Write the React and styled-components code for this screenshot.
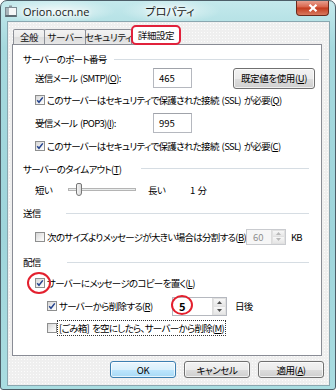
import React from "react";
import styled, { createGlobalStyle } from "styled-components";

const GlobalStyle = createGlobalStyle`
  html, body { margin: 0; padding: 0; background: #ffffff; }
  body {
    font-family: "Noto Sans CJK JP", "Noto Sans", sans-serif;
    font-size: 9.5px;
    letter-spacing: -0.7px;
    word-spacing: 1.5px;
    color: #000;
    font-feature-settings: "palt";
  }
  #root { width: 336px; height: 390px; }
`;

const Frame = styled.div`
  width: 336px;
  height: 390px;
  box-sizing: border-box;
  border: 1px solid #4d5e68;
  border-radius: 7px 7px 3px 3px;
  background: linear-gradient(180deg, #c4e9ec 0%, #a5d9de 12%, #9fd5db 60%, #a9dde1 100%);
  display: flex;
  flex-direction: column;
  overflow: hidden;
`;

const TitleBar = styled.div`
  height: 20px;
  flex: none;
  display: grid;
  grid-template-columns: 1fr auto 1fr;
  align-items: center;
  padding-left: 4px;
  background:
    radial-gradient(ellipse 60px 12px at 55px 10px, rgba(255,255,255,0.75), transparent),
    radial-gradient(ellipse 50px 12px at 170px 10px, rgba(255,255,255,0.6), transparent);
`;

const TitleLeft = styled.div`
  display: flex;
  align-items: center;
  gap: 5px;
`;

const TitleText = styled.span`
  font-family: "Open Sans", "Noto Sans CJK JP", sans-serif;
  font-size: 11px;
  letter-spacing: 0;
  word-spacing: 0;
  color: #1a1a1a;
  text-shadow: 0 0 5px #fff, 0 0 8px #fff;
`;

const CloseButton = styled.div`
  justify-self: end;
  align-self: start;
  margin: -1px 6px 0 0;
  width: 33px;
  height: 16px;
  box-sizing: border-box;
  border: 1px solid #6b2a1c;
  border-top: none;
  border-radius: 0 0 4px 4px;
  background: linear-gradient(180deg, #e9a899 0%, #d8634a 48%, #c23a1d 52%, #d87a5f 100%);
  display: flex;
  align-items: center;
  justify-content: center;
`;

const Body = styled.div`
  flex: 1;
  margin: 0 5px 3px 6px;
  border: 1px solid #8aa7b0;
  background-color: #efefef;
  background-image: radial-gradient(#fcfcfc 0.7px, transparent 0.8px);
  background-size: 3px 3px;
  display: flex;
  flex-direction: column;
`;

const TabStrip = styled.div`
  height: 19px;
  margin: 3px 0 0 5px;
  display: flex;
  align-items: flex-end;
  position: relative;
  z-index: 1;
`;

const Tab = styled.div`
  width: ${p => p.w}px;
  height: ${p => (p.active ? 20 : 15)}px;
  box-sizing: border-box;
  margin-right: -1px;
  margin-bottom: ${p => (p.active ? -1 : 0)}px;
  border: ${p => (p.active ? "2px solid #e1213b" : "1px solid #8c8f97")};
  border-bottom: ${p => (p.active ? "2px solid #e1213b" : "none")};
  border-radius: ${p => (p.active ? "5px" : "2px 2px 0 0")};
  background: ${p => (p.active ? "#ffffff" : "linear-gradient(180deg, #f3f3f3 0%, #ebebeb 50%, #dedede 51%, #e6e6e6 100%)")};
  display: flex;
  align-items: center;
  justify-content: center;
  white-space: nowrap;
  letter-spacing: -0.4px;
  color: #111;
`;

const Panel = styled.div`
  flex: 1;
  margin: 0 7px 0 4px;
  border: 1px solid #898c95;
  background: #ffffff;
  display: flex;
  flex-direction: column;
  padding: 5px 0 0 10px;
`;

const Heading = styled.div`
  height: ${p => p.h}px;
  margin-top: ${p => p.mt || 0}px;
  display: flex;
  align-items: center;
  justify-content: space-between;
  padding-right: 12px;
  flex: none;
`;

const HeadLine = styled.div`
  width: ${p => p.w}px;
  height: 1px;
  background: #d6dde3;
`;

const Row = styled.div`
  height: ${p => p.h}px;
  margin-top: ${p => p.mt || 0}px;
  padding-left: ${p => p.indent}px;
  padding-right: ${p => p.pr || 0}px;
  display: flex;
  align-items: center;
  flex: none;
`;

const Label = styled.span`
  width: ${p => (p.w ? p.w + "px" : "auto")};
  margin-left: ${p => p.ml || 0}px;
  flex: none;
  white-space: nowrap;
`;

const TextBox = styled.div`
  width: ${p => p.w}px;
  height: ${p => p.h}px;
  box-sizing: border-box;
  border: 1px solid #b5b8bf;
  border-top-color: #a0a3aa;
  background: #fff;
  display: flex;
  align-items: center;
  padding-left: 5px;
  letter-spacing: 0;
`;

const PushButton = styled.div`
  width: ${p => p.w}px;
  height: ${p => p.h}px;
  margin-left: ${p => p.ml || 0}px;
  box-sizing: border-box;
  border: 1px solid ${p => (p.focus ? "#3c7fb1" : "#707070")};
  border-radius: 3px;
  background: ${p => p.focus
    ? "linear-gradient(180deg, #eaf6fd 0%, #d9f0fc 50%, #bee6fd 51%, #a7d9f5 100%)"
    : "linear-gradient(180deg, #f2f2f2 0%, #ebebeb 50%, #dddddd 51%, #cfcfcf 100%)"};
  box-shadow: inset 0 0 0 1px rgba(255,255,255,0.7);
  display: flex;
  align-items: center;
  justify-content: center;
  white-space: nowrap;
  letter-spacing: -0.4px;
  flex: none;
`;

const Box = styled.span`
  position: relative;
  width: 10px;
  height: 10px;
  box-sizing: border-box;
  border: 1px solid #8e8f8f;
  background: linear-gradient(135deg, #d6d6d6 0%, #f4f4f4 70%, #ffffff 100%);
  margin-right: ${p => p.gap}px;
  flex: none;
  display: flex;
  align-items: center;
  justify-content: center;
`;

const RedRing = styled.span`
  position: absolute;
  left: ${p => p.x}px;
  top: ${p => p.y}px;
  width: ${p => p.w}px;
  height: ${p => p.h}px;
  box-sizing: border-box;
  border: 2px solid #e3202e;
  border-radius: 50%;
  pointer-events: none;
`;

const Focus = styled.span`
  outline: 1px dotted #333;
  padding: 0 1px;
`;

const Track = styled.div`
  position: relative;
  width: 68px;
  height: 3px;
  box-sizing: border-box;
  border: 1px solid #b4b4b4;
  background: #e9ecec;
  margin: 0 12px 0 0;
  flex: none;
`;

const Thumb = styled.span`
  position: absolute;
  left: 7px;
  top: -6px;
  width: 6px;
  height: 13px;
  box-sizing: border-box;
  border: 1px solid #777;
  border-radius: 2px 2px 3px 3px;
  background: linear-gradient(90deg, #f4f4f4, #d9d9d9);
`;

const Spin = styled.div`
  width: ${p => p.w}px;
  height: ${p => p.h}px;
  margin-left: ${p => p.ml || 0}px;
  box-sizing: border-box;
  border: 1px solid ${p => (p.disabled ? "#c9cbcf" : "#b5b8bf")};
  background: ${p => (p.disabled ? "#f6f6f6" : "#fff")};
  display: flex;
  flex: none;
`;

const SpinValue = styled.div`
  flex: 1;
  display: flex;
  align-items: center;
  padding-left: 6px;
  letter-spacing: 0;
  color: ${p => (p.disabled ? "#8f8f8f" : "#000")};
  font-size: ${p => (p.big ? 11 : 9.5)}px;
  font-weight: ${p => (p.big ? 600 : 400)};
`;

const SpinArrows = styled.div`
  width: 13px;
  display: flex;
  flex-direction: column;
  border-left: 1px solid #dcdcdc;
`;

const Arrow = styled.div`
  flex: 1;
  display: flex;
  align-items: center;
  justify-content: center;
  background: linear-gradient(180deg, #f7f7f7, #e6e6e6);
  border: 1px solid #e1e1e1;
  & + & { border-top: none; }
`;

const ValueWrap = styled.span`
  position: relative;
`;

const Footer = styled.div`
  height: 17px;
  margin: 5px 5px 7px 0;
  display: flex;
  justify-content: flex-end;
  gap: 8px;
  flex: none;
`;

function Check({ checked, gap = 2, ring }) {
  return (
    <Box gap={gap}>
      {checked && (
        <svg width="8" height="8" viewBox="0 0 8 8">
          <path d="M1.2 4.2 L3 6.3 L6.8 1.4" fill="none" stroke="#24438e" strokeWidth="1.5" />
        </svg>
      )}
      {ring && <RedRing x={-9} y={-7} w={24} h={22} />}
    </Box>
  );
}

function Tri({ up, color = "#4d4d4d" }) {
  return (
    <svg width="5" height="3" viewBox="0 0 5 3">
      <path d={up ? "M0 3 L2.5 0 L5 3 Z" : "M0 0 L2.5 3 L5 0 Z"} fill={color} />
    </svg>
  );
}

function SpinBox({ w, h, ml, value, disabled, ringed }) {
  const arrowColor = disabled ? "#b8b8b8" : "#4d4d4d";
  return (
    <Spin w={w} h={h} ml={ml} disabled={disabled}>
      <SpinValue disabled={disabled} big={ringed}>
        {ringed ? (
          <ValueWrap>
            {value}
            <RedRing x={-8} y={-3} w={22} h={20} />
          </ValueWrap>
        ) : value}
      </SpinValue>
      <SpinArrows>
        <Arrow><Tri up color={arrowColor} /></Arrow>
        <Arrow><Tri color={arrowColor} /></Arrow>
      </SpinArrows>
    </Spin>
  );
}

function WindowIcon() {
  return (
    <svg width="13" height="13" viewBox="0 0 13 13">
      <rect x="0.5" y="2.5" width="11" height="9" fill="#f4f6f7" stroke="#7b8a92" />
      <rect x="1" y="3" width="3" height="8" fill="#a9b4ba" />
      <rect x="0.5" y="10" width="11" height="2" fill="#5d6b73" />
      <rect x="4" y="0.5" width="3" height="2" fill="#8c9aa1" />
    </svg>
  );
}

export default function App() {
  return (
    <>
      <GlobalStyle />
      <Frame>
        <TitleBar>
          <TitleLeft>
            <WindowIcon />
            <TitleText>Orion.ocn.ne</TitleText>
          </TitleLeft>
          <TitleText>プロパティ</TitleText>
          <CloseButton>
            <svg width="10" height="8" viewBox="0 0 10 8">
              <path d="M1.5 0.8 L8.5 7.2 M8.5 0.8 L1.5 7.2" stroke="#ffffff" strokeWidth="2.2" />
            </svg>
          </CloseButton>
        </TitleBar>

        <Body>
          <TabStrip>
            <Tab w={32}>全般</Tab>
            <Tab w={42}>サーバー</Tab>
            <Tab w={47}>セキュリティ</Tab>
            <Tab w={50} active>詳細設定</Tab>
          </TabStrip>

          <Panel>
            <Heading h={18}>
              <Label>サーバーのポート番号</Label>
              <HeadLine w={195} />
            </Heading>
            <Row h={20} indent={12}>
              <Label w={118}>送信メール (SMTP)(<u>O</u>):</Label>
              <TextBox w={39} h={20}>465</TextBox>
              <PushButton w={82} h={21} ml={41}>既定値を使用(<u>U</u>)</PushButton>
            </Row>
            <Row h={23} indent={12}>
              <Check checked />
              <Label>このサーバーはセキュリティで保護された接続 (SSL) が必要(<u>Q</u>)</Label>
            </Row>
            <Row h={23} indent={12}>
              <Label w={118}>受信メール (POP3)(<u>I</u>):</Label>
              <TextBox w={39} h={20}>995</TextBox>
            </Row>
            <Row h={23} indent={12}>
              <Check checked />
              <Label>このサーバーはセキュリティで保護された接続 (SSL) が必要(<u>C</u>)</Label>
            </Row>

            <Heading h={23}>
              <Label>サーバーのタイムアウト(<u>T</u>)</Label>
              <HeadLine w={168} />
            </Heading>
            <Row h={19} indent={12}>
              <Label w={33}>短い</Label>
              <Track><Thumb /></Track>
              <Label w={42}>長い</Label>
              <Label>1 分</Label>
            </Row>

            <Heading h={28}>
              <Label>送信</Label>
              <HeadLine w={243} />
            </Heading>
            <Row h={19} indent={12} pr={9}>
              <Check />
              <Label>次のサイズよりメッセージが大きい場合は分割する(<u>B</u>)</Label>
              <SpinBox w={40} h={16} ml="auto" value="60" disabled />
              <Label ml={5}>KB</Label>
            </Row>

            <Heading h={20} mt={6}>
              <Label>配信</Label>
              <HeadLine w={242} />
            </Heading>
            <Row h={22} indent={12}>
              <Check checked ring />
              <Label>サーバーにメッセージのコピーを置く(<u>L</u>)</Label>
            </Row>
            <Row h={24} indent={24}>
              <Check checked />
              <Label w={113}>サーバーから削除する(<u>R</u>)</Label>
              <SpinBox w={55} h={19} value="5" ringed />
              <Label ml={8}>日後</Label>
            </Row>
            <Row h={20} indent={24}>
              <Check gap={1} />
              <Label><Focus>[ごみ箱] を空にしたら、サーバーから削除(<u>M</u>)</Focus></Label>
            </Row>
          </Panel>

          <Footer>
            <PushButton w={66} h={17} focus>OK</PushButton>
            <PushButton w={66} h={17}>キャンセル</PushButton>
            <PushButton w={66} h={17}>適用(<u>A</u>)</PushButton>
          </Footer>
        </Body>
      </Frame>
    </>
  );
}
